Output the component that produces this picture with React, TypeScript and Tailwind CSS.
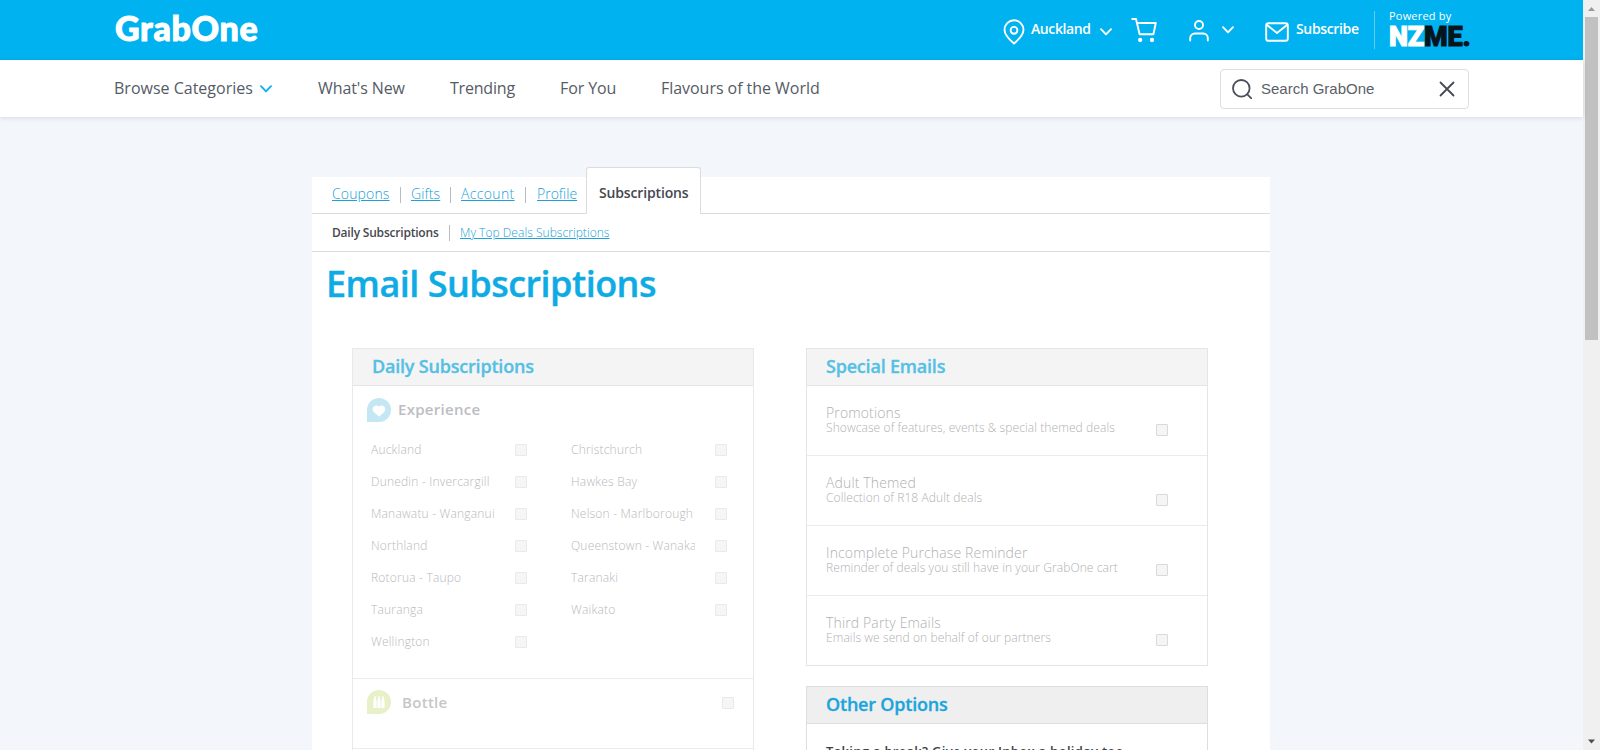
import type { ReactNode } from "react";

const experience: [string, string?][] = [
  ["Auckland", "Christchurch"],
  ["Dunedin - Invercargill", "Hawkes Bay"],
  ["Manawatu - Wanganui", "Nelson - Marlborough"],
  ["Northland", "Queenstown - Wanaka"],
  ["Rotorua - Taupo", "Taranaki"],
  ["Tauranga", "Waikato"],
  ["Wellington"],
];

const special = [
  ["Promotions", "Showcase of features, events & special themed deals"],
  ["Adult Themed", "Collection of R18 Adult deals"],
  ["Incomplete Purchase Reminder", "Reminder of deals you still have in your GrabOne cart"],
  ["Third Party Emails", "Emails we send on behalf of our partners"],
];

function Check({ strong = false }: { strong?: boolean }) {
  return (
    <span
      className={
        strong
          ? "block size-3 shrink-0 rounded-[1px] border border-[#dadada] bg-[#f5f5f5]"
          : "block size-3 shrink-0 rounded-[1px] border border-[#e9e9e9] bg-[#f6f6f6]"
      }
    />
  );
}

function PanelHead({ children, active = false }: { children: ReactNode; active?: boolean }) {
  return (
    <h2
      className={
        active
          ? "h-[37px] border-b border-[#dcdee2] bg-[#efefef] pl-[19px] text-[18px] leading-[35px] font-semibold tracking-[-0.2px] text-[#1ba5dc] [-webkit-text-stroke:0.3px_#1ba5dc]"
          : "h-[37px] border-b border-[#e4e5e8] bg-[#f4f4f4] pl-[19px] text-[18px] leading-[35px] font-semibold tracking-[-0.2px] text-[#54c0e4] [-webkit-text-stroke:0.3px_#54c0e4]"
      }
    >
      {children}
    </h2>
  );
}

function City({ name }: { name?: string }) {
  return (
    <div className="flex h-8 w-[200px] shrink-0 items-center">
      {name && (
        <>
          <span className="w-[124px] overflow-hidden text-[12px] leading-5 font-light tracking-[0.2px] whitespace-nowrap text-[#b8b8bc]">
            {name}
          </span>
          <span className="ml-5">
            <Check />
          </span>
        </>
      )}
    </div>
  );
}

function Chevron({ className }: { className: string }) {
  return (
    <svg viewBox="0 0 12 8" className={className} fill="none" stroke="currentColor" strokeWidth="1.9" strokeLinecap="round" strokeLinejoin="round">
      <path d="M1 1.200 6 6.400 11 1.200" />
    </svg>
  );
}

function Header() {
  return (
    <header className="flex h-[60px] bg-[#00b2f0] pr-[113px] pl-[115px] text-white">
      <div className="mt-[8px] font-['Lato',sans-serif] text-[34px] leading-[40px] font-black tracking-[0.7px] [-webkit-text-stroke:1px_white]">GrabOne</div>
      <div className="ml-auto flex">
        <svg viewBox="0 0 22 26" className="mt-[19px] h-[26px] w-[22px]" fill="none" stroke="currentColor" strokeWidth="1.9">
          <path d="M11 24.500C8 22 1.500 16.600 1.500 10.800a9.500 9.500 0 0 1 19 0C20.500 16.600 14 22 11 24.500Z" />
          <circle cx="11" cy="11.300" r="3.400" />
        </svg>
        <span className="mt-[17px] ml-[6px] w-[61px] text-[14px] leading-6 font-semibold tracking-[-0.4px] whitespace-nowrap">Auckland</span>
        <Chevron className="mt-[28px] ml-[8px] h-2 w-3" />
        <svg viewBox="0 0 26 26" className="mt-[17px] ml-[19px] h-[26px] w-[26px]" fill="none" stroke="currentColor" strokeWidth="1.9" strokeLinecap="round" strokeLinejoin="round">
          <path d="M1.200 2H5l3.600 15.200h13.800L24.800 6H6" />
          <circle cx="9.200" cy="23" r="1.200" fill="currentColor" />
          <circle cx="21" cy="23" r="1.200" fill="currentColor" />
        </svg>
        <svg viewBox="0 0 20 22" className="mt-[20px] ml-[32px] h-[22px] w-5" fill="none" stroke="currentColor" strokeWidth="1.900" strokeLinecap="round">
          <circle cx="10" cy="5" r="4" />
          <path d="M1.200 20.500v-2.500a4.500 4.500 0 0 1 4.500-4.500h8.600a4.500 4.500 0 0 1 4.500 4.500v2.500" />
        </svg>
        <Chevron className="mt-[26px] ml-[13px] h-2 w-3" />
        <svg viewBox="0 0 24 20" className="mt-[22px] ml-[31px] h-5 w-6" fill="none" stroke="currentColor" strokeWidth="1.900" strokeLinecap="round" strokeLinejoin="round">
          <rect x="1.200" y="1.200" width="21.600" height="17.600" rx="2" />
          <path d="m2 3 10 8L22 3" />
        </svg>
        <span className="mt-[17px] ml-[7px] w-[63px] text-[14px] leading-6 font-semibold tracking-[-0.35px] whitespace-nowrap">Subscribe</span>
        <span className="mt-[11px] ml-[15px] h-[38px] w-px bg-[#5cccf5]" />
        <div className="mt-[8px] ml-[14px] w-[81px] whitespace-nowrap">
          <div className="text-[11px] leading-4 tracking-[0.2px]">Powered by</div>
          <div className="mt-[2px] font-['Roboto',sans-serif] text-[27px] leading-[22px] font-black tracking-[-0.2px]">
            <span className="[-webkit-text-stroke:1px_white]">NZ</span>
            <span className="text-[#06141c] [-webkit-text-stroke:1px_#06141c]">ME.</span>
          </div>
        </div>
      </div>
    </header>
  );
}

function Nav() {
  return (
    <nav className="relative flex h-[57px] items-start bg-white pr-[114px] pl-[114px] text-[16px] leading-6 whitespace-nowrap text-[#555b66] shadow-[0_1px_5px_rgba(0,0,0,0.12)]">
      <span className="mt-4 w-[139px]">Browse Categories</span>
      <Chevron className="mt-[25px] ml-[7px] h-2 w-3 text-[#12b0ec]" />
      <span className="mt-4 ml-[46px] w-[88px] tracking-[-0.1px]">What's New</span>
      <span className="mt-4 ml-[44px] w-[65px] tracking-[-0.2px]">Trending</span>
      <span className="mt-4 ml-[45px] w-[57px] tracking-[-0.1px]">For You</span>
      <span className="mt-4 ml-[44px] tracking-[-0.04px]">Flavours of the World</span>
      <div className="mt-[9px] ml-auto flex h-10 w-[249px] items-center rounded-[4px] border border-[#dcdde0] pr-[13px] pl-[11px]">
        <svg viewBox="0 0 20 20" className="size-5" fill="none" stroke="#4b4f5a" strokeWidth="1.800" strokeLinecap="round">
          <circle cx="9.300" cy="9.300" r="8.300" />
          <path d="m15.300 15.300 4 4" />
        </svg>
        <span className="ml-[9px] font-['Liberation_Sans',sans-serif] text-[15px] text-[#5b5f69]">Search GrabOne</span>
        <svg viewBox="0 0 16 16" className="ml-auto size-4" fill="none" stroke="#454953" strokeWidth="1.800" strokeLinecap="round">
          <path d="m1.500 1.500 13 13m0-13-13 13" />
        </svg>
      </div>
    </nav>
  );
}

function Tabs() {
  return (
    <div className="flex h-[37px] items-start border-b border-[#dadce0] pl-5 text-[14px] leading-5 font-light whitespace-nowrap text-[#209fd8]">
      <a className="mt-[7px] w-[58px] tracking-[0.15px] underline">Coupons</a>
      <i className="mt-[10px] ml-[10px] h-4 w-px bg-[#b9bcc0]" />
      <a className="mt-[7px] ml-[10px] w-[29px] tracking-[0.1px] underline">Gifts</a>
      <i className="mt-[10px] ml-[10px] h-4 w-px bg-[#b9bcc0]" />
      <a className="mt-[7px] ml-[10px] w-[54px] tracking-[0.35px] underline">Account</a>
      <i className="mt-[10px] ml-[10px] h-4 w-px bg-[#b9bcc0]" />
      <a className="mt-[7px] ml-[11px] w-[40px] underline">Profile</a>
      <div className="-mt-[10px] ml-[9px] h-[47px] w-[115px] rounded-t-[3px] border border-b-0 border-[#dadce0] bg-white pt-[15px] pl-3 font-semibold tracking-[-0.15px] text-[#45484f]">
        Subscriptions
      </div>
    </div>
  );
}

export default function App() {
  return (
    <div className="flex h-[750px] w-[1600px] overflow-hidden font-['Open_Sans',sans-serif]">
      <div className="w-[1583px] shrink-0 bg-[#f3f7fc]">
        <Header />
        <Nav />
        <main className="mt-[60px] ml-[312px] h-[600px] w-[958px] bg-white">
          <Tabs />
          <div className="flex h-[38px] items-start border-b border-[#dadce0] pl-5 text-[12px] leading-5 whitespace-nowrap">
            <span className="mt-[9px] w-[108px] font-semibold tracking-[-0.2px] text-[#45484f]">Daily Subscriptions</span>
            <i className="mt-[11px] ml-[9px] h-4 w-px bg-[#b9bcc0]" />
            <a className="mt-[9px] ml-[10px] font-light tracking-[0.04px] text-[#209fd8] underline">My Top Deals Subscriptions</a>
          </div>
          <h1 className="mt-[8px] ml-[14px] text-[36px] leading-[48px] font-semibold tracking-[-0.52px] text-[#0fabe5] [-webkit-text-stroke:0.4px_#0fabe5]">Email Subscriptions</h1>
          <div className="mt-[40px] flex items-start pl-10">
            <section className="h-[420px] w-[402px] border border-[#e8e9ec]">
              <PanelHead>Daily Subscriptions</PanelHead>
              <div className="h-[293px] border-b border-[#ebebec]">
                <div className="flex h-[48px] items-start pt-[11px] pl-[14px]">
                  <svg viewBox="0 0 24 24" className="mt-px size-6">
                    <path d="M0 12a12 12 0 1 1 12 12H0Z" fill="#c3e7f3" />
                    <path d="M12 18.800 6.800 14C3.300 9.800 8.500 5.200 12 8.700 15.500 5.200 20.700 9.800 17.200 14Z" fill="#fff" />
                  </svg>
                  <span className="ml-[7px] text-[15px] leading-6 font-semibold tracking-[0.3px] text-[#bcbdc2]">Experience</span>
                </div>
                <div className="pl-[18px]">
                  {experience.map(([a, b]) => (
                    <div key={a} className="flex">
                      <City name={a} />
                      <City name={b} />
                    </div>
                  ))}
                </div>
              </div>
              <div className="flex h-[70px] items-start border-b border-[#ebebec] pt-[11px] pr-[19px] pl-[14px]">
                <svg viewBox="0 0 24 24" className="size-6">
                  <path d="M0 12a12 12 0 1 1 12 12H0Z" fill="#e8f0c9" />
                  <path d="M7.600 6h.8l1.200 5.500v6.500H6.400v-6.500ZM11.600 6h.8l1.200 5.500v6.500h-3.200v-6.500ZM15.600 6h.8l1.200 5.500v6.500h-3.200v-6.500Z" fill="#fff" />
                </svg>
                <span className="ml-[11px] text-[15px] leading-6 font-semibold tracking-[0.3px] text-[#c6c6c8]">Bottle</span>
                <span className="mt-[7px] ml-auto">
                  <Check />
                </span>
              </div>
            </section>
            <div className="ml-[52px] flex w-[402px] flex-col gap-5">
              <section className="border border-[#e4e5e8]">
                <PanelHead>Special Emails</PanelHead>
                {special.map(([title, text]) => (
                  <div key={title} className="flex h-[70px] items-start border-b border-[#ebebec] pr-[39px] pl-[19px] font-light whitespace-nowrap text-[#b0b0b3] last:h-[69px] last:border-b-0">
                    <div className="pt-[19px]">
                      <div className="text-[14px] leading-4 tracking-[0.14px]">{title}</div>
                      <div className="text-[12px] leading-[13px] tracking-[0.09px]">{text}</div>
                    </div>
                    <span className="mt-[38px] ml-auto">
                      <Check strong />
                    </span>
                  </div>
                ))}
              </section>
              <section className="h-[120px] border border-[#dcdee2]">
                <PanelHead active>Other Options</PanelHead>
                <p className="pt-[17px] pl-[19px] text-[13px] leading-5 font-semibold tracking-[0.3px] whitespace-nowrap text-[#3c3f45]">
                  Taking a break? Give your Inbox a holiday too.
                </p>
              </section>
            </div>
          </div>
        </main>
      </div>
      <div className="flex h-[750px] w-[17px] flex-col items-center bg-[#f0f0f0]">
        <svg viewBox="0 0 17 17" className="size-[17px] shrink-0">
          <path d="M5 11h7L8.500 7Z" fill="#9a9a9a" />
        </svg>
        <div className="h-[323px] w-[13px] bg-[#c1c1c1]" />
        <svg viewBox="0 0 17 17" className="mt-auto size-[17px] shrink-0">
          <path d="M5 6.500h7L8.500 10.500Z" fill="#4d4d4d" />
        </svg>
      </div>
    </div>
  );
}
